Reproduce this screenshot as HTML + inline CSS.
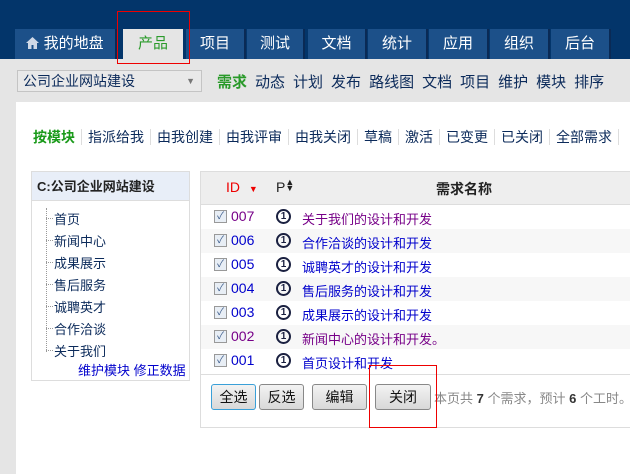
<!DOCTYPE html>
<html><head><meta charset="utf-8"><style>
*{margin:0;padding:0;box-sizing:border-box}
body{width:630px;height:474px;overflow:hidden;background:#e5e5e5;font:13px "Liberation Sans","Noto Sans CJK SC",sans-serif;position:relative;color:#333}
.top{position:absolute;left:0;top:0;width:630px;height:59px;background:#03356a}
.tab{position:absolute;top:29px;height:30px;background:#1c5089;color:#fff;font-size:15px;text-align:center;line-height:30px;border-right:2px solid #0a2a55}
.tab.on{background:#e5e5e5;color:#2a9a2a;border:none}
.abs{position:absolute;white-space:nowrap}
.sel{left:17px;top:70px;width:185px;height:22px;border:1px solid #c4c4c4;background:#e9e9e9;font-size:14px;padding-left:5px;line-height:20px;color:#0b2a5a}
.nav{top:71px;left:217px;font-size:15px;color:#0b2a5a}
.nav span{margin-right:8px}
.white{left:16px;top:102px;width:614px;height:372px;background:#fff}
.flt{top:127px;left:33px;font-size:14px;color:#0b2a5a}
.flt span{padding:0 6px;border-right:1px solid #ddd}
.lp{border:1px solid #ddd;background:#fff}
.lp .h{height:29px;background:#e8eef8;border-bottom:1px solid #ddd;font-weight:bold;font-size:13px;line-height:29px;padding-left:5px;color:#222}
.lp .it{position:absolute;left:22px;font-size:13px;color:#0b2a5a}
.lp .it::before{content:"";position:absolute;left:-8px;top:9px;width:7px;border-top:1px dotted #999}
.tb{border:1px solid #ddd;background:#fff}
.row{position:absolute;left:0;width:440px;height:24px;font-size:13px}
.cb{position:absolute;left:13px;top:5px;width:13px;height:13px;border:1px solid #999;background:#e8eef5;font-size:10px;line-height:11px;color:#3a5a8a;text-align:center}
.id{position:absolute;left:30px;top:3px;font-size:14px}
.pi{position:absolute;left:75px;top:4px;width:15px;height:15px;border:2px solid #1a2040;border-radius:50%;font-size:10px;line-height:11px;text-align:center;font-weight:bold;color:#1a2040}
.nm{position:absolute;left:101px;top:4px}
.btn{position:absolute;top:384px;height:26px;border:1px solid #888;border-radius:3px;background:linear-gradient(#f3f3f3,#d8d8d8);font-size:14px;text-align:center;line-height:24px;color:#111}
</style></head><body>
<div class="top"></div>
<div class="tab" style="left:15px;width:102px"><svg width="13" height="12" viewBox="0 0 13 12" style="vertical-align:-1px"><path d="M6.5 0L0 6h2v6h3.5V8h2v4H11V6h2z" fill="#cfd8e6"/></svg> 我的地盘</div>
<div class="tab on" style="left:123px;width:60px">产品</div>
<div class="tab" style="left:186px;width:60px">项目</div>
<div class="tab" style="left:247px;width:58px">测试</div>
<div class="tab" style="left:308px;width:59px">文档</div>
<div class="tab" style="left:368px;width:60px">统计</div>
<div class="tab" style="left:429px;width:60px">应用</div>
<div class="tab" style="left:490px;width:60px">组织</div>
<div class="tab" style="left:551px;width:60px">后台</div>
<div style="position:absolute;left:117px;top:11px;width:73px;height:53px;border:1px solid #e00"></div>
<div class="abs sel">公司企业网站建设<span style="position:absolute;right:6px;color:#777;font-size:9px">▼</span></div>
<div class="abs nav"><span style="color:#2a9a2a;font-weight:bold">需求</span><span>动态</span><span>计划</span><span>发布</span><span>路线图</span><span>文档</span><span>项目</span><span>维护</span><span>模块</span><span>排序</span></div>
<div class="abs white"></div>
<div class="abs flt"><span style="color:#1a9a1a;font-weight:bold;padding-left:0">按模块</span><span>指派给我</span><span>由我创建</span><span>由我评审</span><span>由我关闭</span><span>草稿</span><span>激活</span><span>已变更</span><span>已关闭</span><span>全部需求</span></div>
<div class="abs lp" style="left:31px;top:171px;width:159px;height:210px">
<div class="h">C:公司企业网站建设</div>
<div style="position:absolute;left:14px;top:36px;height:144px;border-left:1px dotted #999"></div>
<div class="it" style="top:37px">首页</div><div class="it" style="top:59px">新闻中心</div><div class="it" style="top:81px">成果展示</div><div class="it" style="top:103px">售后服务</div><div class="it" style="top:125px">诚聘英才</div><div class="it" style="top:147px">合作洽谈</div><div class="it" style="top:169px">关于我们</div>
<div class="abs" style="top:188px;left:46px;color:#00c">维护模块 修正数据</div>
</div>
<div class="abs tb" style="left:200px;top:171px;width:440px;height:257px">
<div style="height:33px;position:relative;background:#eee;border-bottom:1px solid #ddd"><span class="abs" style="left:25px;top:7px;color:#e00;font-size:14px">ID <span style="font-size:9px">&nbsp;&nbsp;▼</span></span><span class="abs" style="left:75px;top:7px;font-size:14px;color:#222">P<span style="font-size:9px;display:inline-block;line-height:6px;vertical-align:1px">▲<br>▼</span></span><span class="abs" style="left:235px;top:7px;font-weight:bold;color:#222;font-size:14px">需求名称</span></div>
<div style="position:relative">
<div class="row" style="top:0"><div class="cb">✓</div><span class="id" style="color:#708">007</span><div class="pi">1</div><span class="nm" style="color:#708">关于我们的设计和开发</span></div>
<div class="row" style="top:24px;background:#f7f7f7"><div class="cb">✓</div><span class="id" style="color:#00c">006</span><div class="pi">1</div><span class="nm" style="color:#00c">合作洽谈的设计和开发</span></div>
<div class="row" style="top:48px"><div class="cb">✓</div><span class="id" style="color:#00c">005</span><div class="pi">1</div><span class="nm" style="color:#00c">诚聘英才的设计和开发</span></div>
<div class="row" style="top:72px;background:#f7f7f7"><div class="cb">✓</div><span class="id" style="color:#00c">004</span><div class="pi">1</div><span class="nm" style="color:#00c">售后服务的设计和开发</span></div>
<div class="row" style="top:96px"><div class="cb">✓</div><span class="id" style="color:#00c">003</span><div class="pi">1</div><span class="nm" style="color:#00c">成果展示的设计和开发</span></div>
<div class="row" style="top:120px;background:#f7f7f7"><div class="cb">✓</div><span class="id" style="color:#708">002</span><div class="pi">1</div><span class="nm" style="color:#708">新闻中心的设计和开发。</span></div>
<div class="row" style="top:144px"><div class="cb">✓</div><span class="id" style="color:#00c">001</span><div class="pi">1</div><span class="nm" style="color:#00c">首页设计和开发</span></div>
<div style="position:absolute;left:0;top:169px;width:440px;border-top:1px solid #ddd"></div>
</div></div>
<div class="btn" style="left:211px;width:45px;border-color:#3aa0d8">全选</div>
<div class="btn" style="left:259px;width:45px">反选</div>
<div class="btn" style="left:312px;width:55px">编辑</div>
<div class="btn" style="left:375px;width:56px">关闭</div>
<div class="abs" style="left:434px;top:388px;color:#888;font-size:13px">本页共 <b style="color:#333">7</b> 个需求，预计 <b style="color:#333">6</b> 个工时。</div>
<div style="position:absolute;left:369px;top:365px;width:68px;height:63px;border:1px solid #e00"></div>
</body></html>
